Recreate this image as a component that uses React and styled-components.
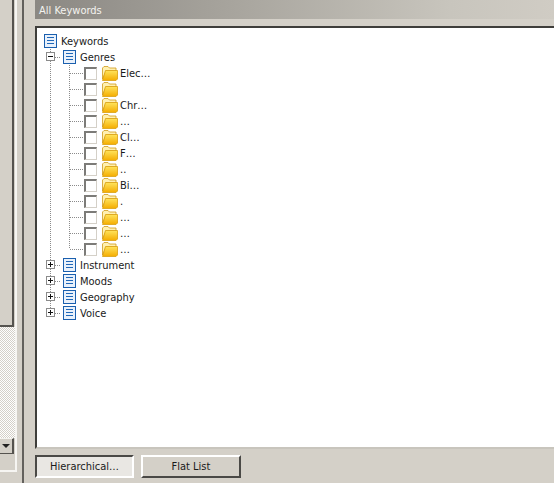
import React from "react";
import styled, { createGlobalStyle } from "styled-components";

const Global = createGlobalStyle`
  html, body { margin: 0; padding: 0; background: #d4d0c8; overflow: hidden; }
  * { box-sizing: border-box; }
`;

const Window = styled.div`
  width: 554px;
  height: 483px;
  display: flex;
  overflow: hidden;
  background: #d4d0c8;
  font-family: "DejaVu Sans Condensed", "DejaVu Sans", sans-serif;
  font-size: 11px;
  color: #1a1a1a;
`;

const Rail = styled.div`
  width: 24px;
  flex: none;
  display: flex;
  border-right: 2px solid #63615d;
`;

const RailTrack = styled.div`
  width: 17px;
  flex: none;
  display: flex;
  flex-direction: column;
`;

const ScrollArea = styled.div`
  height: 472px;
  flex: none;
  display: flex;
  flex-direction: column;
  border-right: 2px solid #f6f5f2;
  border-bottom: 2px solid #f6f5f2;
`;

const Checker = styled.div`
  flex: 1;
  background-color: #f2f0ec;
  background-image: repeating-conic-gradient(#d4d0c8 0 25%, #ffffff 0 50%);
  background-size: 2px 2px;
`;

const Thumb = styled.div`
  height: 327px;
  flex: none;
  width: 14px;
  background: #d4d0c8;
  border-right: 2px solid #55534f;
  border-bottom: 2px solid #55534f;
`;

const ArrowButton = styled.div`
  height: 16px;
  width: 14px;
  flex: none;
  background: #d4d0c8;
  border-top: 1px solid #f4f3ef;
  border-right: 2px solid #55534f;
  border-bottom: 1px solid #55534f;
  display: flex;
  align-items: center;
  justify-content: center;
  &::after {
    content: "";
    border-left: 4px solid transparent;
    border-right: 4px solid transparent;
    border-top: 4px solid #222;
  }
`;

const BelowTrack = styled.div`
  height: 16px;
  flex: none;
  background: #d4d0c8;
`;

const Main = styled.div`
  flex: 1;
  min-width: 0;
  display: flex;
  flex-direction: column;
  padding-left: 11px;
`;

const Header = styled.div`
  height: 19px;
  flex: none;
  padding: 1px 0 0 4px;
  display: flex;
  align-items: center;
  color: #f4f3ef;
  background: linear-gradient(to right, #8b8883, #a5a29b 35%, #c8c5bd 80%, #d0ccc4);
`;

const ListFrame = styled.div`
  margin-top: 7px;
  height: 423px;
  flex: none;
  background: #ffffff;
  border-top: 2px solid #3f3e3b;
  border-left: 2px solid #3f3e3b;
  border-bottom: 2px solid #c8c5bd;
  padding: 5px 0 0 4px;
`;

const Row = styled.div`
  height: 16px;
  display: flex;
  align-items: center;
`;

const Guide = styled.div`
  position: relative;
  align-self: stretch;
  flex: none;
  width: ${(p) => p.$width}px;
  &::before {
    content: "";
    position: absolute;
    left: 9px;
    top: 0;
    width: 1px;
    height: ${(p) => (p.$end ? "8px" : "16px")};
    background: repeating-linear-gradient(to bottom, #8b8b8b 0 1px, transparent 1px 2px);
  }
  &::after {
    content: "";
    position: absolute;
    left: 10px;
    right: 0;
    top: 8px;
    height: 1px;
    display: ${(p) => (p.$tick ? "block" : "none")};
    background: repeating-linear-gradient(to right, #8b8b8b 0 1px, transparent 1px 2px);
  }
`;

const Expander = styled.span`
  position: absolute;
  left: 5px;
  top: 3px;
  width: 9px;
  height: 9px;
  background: #fff;
  border: 1px solid #8b8b8b;
  z-index: 1;
  &::before {
    content: "";
    position: absolute;
    left: 1px;
    top: 3px;
    width: 5px;
    height: 1px;
    background: #111;
  }
  &::after {
    content: "";
    display: ${(p) => (p.$open ? "none" : "block")};
    position: absolute;
    left: 3px;
    top: 1px;
    width: 1px;
    height: 5px;
    background: #111;
  }
`;

const DocSvg = styled.svg`
  width: 13px;
  height: 14px;
  flex: none;
  margin-left: 3px;
  margin-right: 4px;
  display: block;
`;

const Check = styled.span`
  width: 13px;
  height: 13px;
  flex: none;
  background: #fff;
  border-top: 2px solid #7c7b78;
  border-left: 2px solid #7c7b78;
  border-right: 1px solid #d4d0c8;
  border-bottom: 1px solid #d4d0c8;
`;

const FolderSvg = styled.svg`
  width: 16px;
  height: 15px;
  flex: none;
  margin-left: 5px;
  margin-right: 2px;
  display: block;
`;

const Label = styled.span`
  white-space: nowrap;
  line-height: 16px;
  padding-top: 2px;
`;

const Footer = styled.div`
  flex: 1;
  display: flex;
  gap: 7px;
  padding-top: 6px;
  align-items: flex-start;
`;

const TabButton = styled.div`
  width: ${(p) => (p.$active ? 99 : 100)}px;
  height: 23px;
  display: flex;
  align-items: center;
  justify-content: center;
  background: ${(p) => (p.$active ? "#e9e7e3" : "#d4d0c8")};
  border-style: solid;
  border-width: 2px;
  border-color: ${(p) =>
    p.$active ? "#4a4946 #ffffff #ffffff #4a4946" : "#ffffff #4a4946 #4a4946 #ffffff"};
`;

const DocIcon = () => (
  <DocSvg viewBox="0 0 13 14">
    <rect x="0.5" y="0.5" width="12" height="13" fill="#e9f1fb" stroke="#1a5fae" />
    <path d="M3 3.5h7M3 6.500h7M3 9.500h7" stroke="#1f67b8" strokeWidth="1" />
  </DocSvg>
);

const FolderIcon = () => (
  <FolderSvg viewBox="0 0 16 15">
    <defs>
      <linearGradient id="fy" x1="0" y1="0" x2="0" y2="1">
        <stop offset="0" stopColor="#ffe45c" />
        <stop offset="1" stopColor="#f4ac00" />
      </linearGradient>
    </defs>
    <path d="M0.500 13V2L2 0.500h4L7.500 2H14V5H4L0.500 13z" fill="#fff0b0" stroke="#cf9a1c" strokeWidth="0.8" />
    <path d="M0.500 14.500L3.500 4.500H15.500V13L14 14.500H0.500z" fill="url(#fy)" stroke="#d99f12" strokeWidth="0.8" />
  </FolderSvg>
);

const children = ["Elec…", "", "Chr…", "…", "Cl…", "F…", "..", "Bi…", ".", "…", "…", "…"];
const closed = ["Instrument", "Moods", "Geography", "Voice"];

export default function App() {
  return (
    <Window>
      <Global />
      <Rail>
        <RailTrack>
          <ScrollArea>
            <Thumb />
            <Checker />
            <ArrowButton />
            <BelowTrack />
          </ScrollArea>
        </RailTrack>
      </Rail>
      <Main>
        <Header>All Keywords</Header>
        <ListFrame>
          <Row>
            <DocIcon />
            <Label>Keywords</Label>
          </Row>
          <Row>
            <Guide $width={19} $tick>
              <Expander $open />
            </Guide>
            <DocIcon />
            <Label>Genres</Label>
          </Row>
          {children.map((text, i) => (
            <Row key={i}>
              <Guide $width={19} />
              <Guide $width={24} $tick $end={i === children.length - 1} />
              <Check />
              <FolderIcon />
              <Label>{text}</Label>
            </Row>
          ))}
          {closed.map((text, i) => (
            <Row key={text}>
              <Guide $width={19} $tick $end={i === closed.length - 1}>
                <Expander />
              </Guide>
              <DocIcon />
              <Label>{text}</Label>
            </Row>
          ))}
        </ListFrame>
        <Footer>
          <TabButton $active>Hierarchical…</TabButton>
          <TabButton>Flat List</TabButton>
        </Footer>
      </Main>
    </Window>
  );
}
